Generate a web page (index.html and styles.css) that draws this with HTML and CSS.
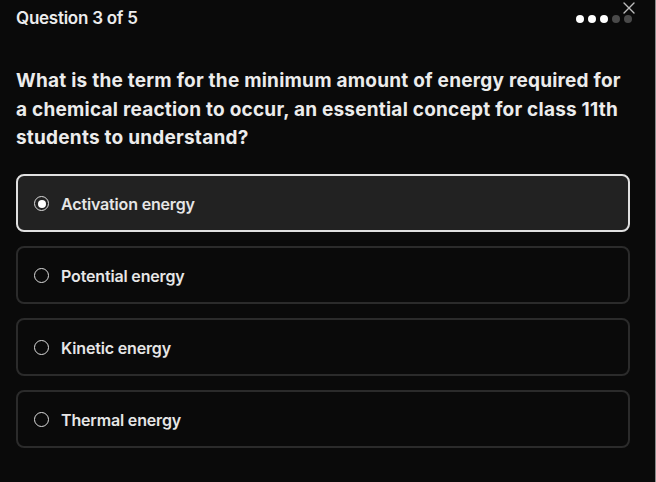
FILE: index.html
```html
<!DOCTYPE html>
<html>
<head>
<meta charset="utf-8">
<link rel="stylesheet" href="styles.css">
</head>
<body>
<div class="panel">
  <header class="top">
    <span class="counter">Question 3 of 5</span>
    <div class="dots">
      <span class="dot on"></span><span class="dot on"></span><span class="dot on"></span><span class="dot"></span><span class="dot"></span>
    </div>
    <button class="close" aria-label="Close">
      <svg width="12" height="12" viewBox="0 0 12 12"><path d="M1 1L11 11M11 1L1 11" stroke="#bdbdbd" stroke-width="1.4" stroke-linecap="round"/></svg>
    </button>
  </header>
  <h2 class="question">What is the term for the minimum amount of energy required for a chemical reaction to occur, an essential concept for class 11th students to understand?</h2>
  <div class="options">
    <label class="option selected"><span class="radio"></span><span class="label">Activation energy</span></label>
    <label class="option"><span class="radio"></span><span class="label">Potential energy</span></label>
    <label class="option"><span class="radio"></span><span class="label">Kinetic energy</span></label>
    <label class="option"><span class="radio"></span><span class="label">Thermal energy</span></label>
  </div>
</div>
</body>
</html>
```
FILE: styles.css
```css
* { box-sizing: border-box; }
html, body { margin: 0; padding: 0; background: #0a0a0a; }
body { font-family: Inter, "Noto Sans", sans-serif; color: #ececec; }
.panel {
  width: 656px;
  height: 482px;
  border-right: 1px solid #8a8a8a;
  margin-right: 1px;
  padding: 0 24px 0 16px;
  position: relative;
}
.top {
  display: flex;
  align-items: center;
  justify-content: space-between;
  height: 36px;
}
.counter {
  font-size: 17px;
  font-weight: 600;
  letter-spacing: -0.015em;
  color: #ededed;
}
.dots { display: flex; gap: 4px; margin-right: -1px; padding-top: 1px; }
.dot { width: 8px; height: 8px; border-radius: 50%; background: #4a4a4a; }
.dot.on { background: #ffffff; }
.close {
  position: absolute;
  top: 2px;
  right: 20px;
  background: none;
  border: 0;
  padding: 0;
  width: 12px;
  height: 12px;
  display: flex;
}
.question {
  margin: 31px 0 0;
  max-width: 610px;
  font-size: 19px;
  font-weight: 700;
  line-height: 28.5px;
  letter-spacing: 0.012em;
  color: #ececec;
}
.options {
  margin-top: 21px;
  display: flex;
  flex-direction: column;
  gap: 14px;
  width: 614px;
}
.option {
  display: flex;
  align-items: center;
  gap: 12px;
  height: 58px;
  padding: 2px 16px 0;
  border: 2px solid #2b2b2b;
  border-radius: 8px;
  background: #0a0a0a;
}
.option.selected {
  border-color: #e0e0e0;
  background: #222222;
}
.radio {
  width: 15px;
  height: 15px;
  border-radius: 50%;
  border: 1.5px solid #dcdcdc;
  display: flex;
  align-items: center;
  justify-content: center;
  flex: none;
}
.option.selected .radio::after {
  content: "";
  width: 8px;
  height: 8px;
  border-radius: 50%;
  background: #ffffff;
}
.label {
  font-size: 16px;
  font-weight: 600;
  letter-spacing: -0.01em;
  color: #e6e6e6;
}
```
